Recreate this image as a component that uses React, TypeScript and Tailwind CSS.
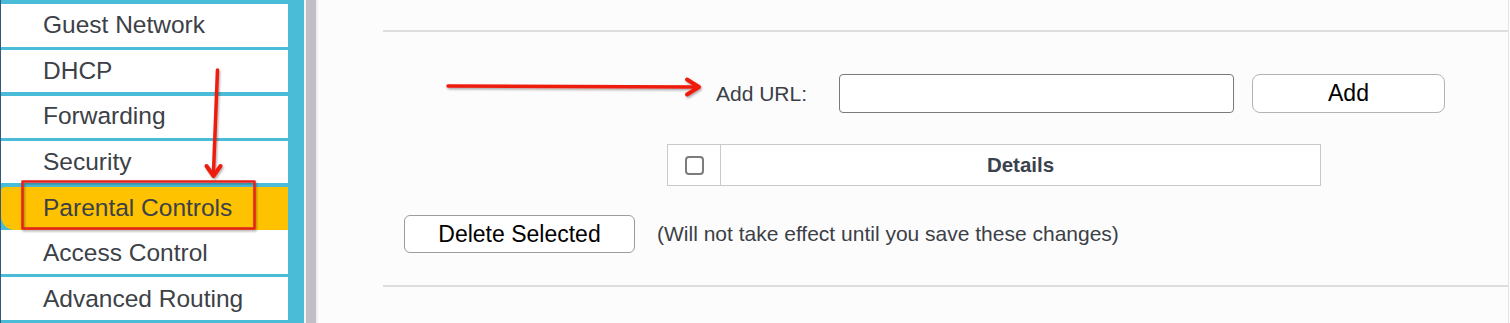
/**
 * Router admin page fragment: side menu with "Parental Controls" selected,
 * and the URL filter form, with red annotation arrows over it.
 */

const menu = [
  { label: 'Guest Network', cls: 'mt-[4px] h-[42.5px] bg-white' },
  { label: 'DHCP', cls: 'mt-[3.5px] h-[42px] bg-white' },
  { label: 'Forwarding', cls: 'mt-[3.5px] h-[42px] bg-white' },
  { label: 'Security', cls: 'mt-[3.5px] h-[42px] bg-white' },
  { label: 'Parental Controls', cls: 'mt-[3.5px] h-[43px] bg-[#fec200] rounded-bl-[14px] rounded-tl-[4px]' },
  { label: 'Access Control', cls: 'h-[44px] pt-[3px] bg-white' },
  { label: 'Advanced Routing', cls: 'mt-[3.5px] h-[43px] pt-[1px] bg-white' },
]

function Annotations() {
  return (
    <svg className="absolute inset-0 pointer-events-none" width="1510" height="323" viewBox="0 0 1510 323" aria-hidden="true">
      <defs>
        <filter id="shadow" x="-10%" y="-10%" width="120%" height="120%">
          <feDropShadow dx="1" dy="1.5" stdDeviation="1" floodColor="#000" floodOpacity="0.35" />
        </filter>
      </defs>
      <g filter="url(#shadow)" stroke="#ee1d10" fill="none" strokeLinecap="round" strokeLinejoin="round">
        {/* highlight box */}
        <rect x="22.5" y="181.5" width="232" height="47" strokeWidth="2.5" stroke="#e3221c" />
        {/* vertical arrow */}
        <path d="M217.5 70 L213.5 172" strokeWidth="3.5" />
        <path d="M206.5 166 L213.5 176 L220.5 166" strokeWidth="4" />
        {/* horizontal arrow */}
        <path d="M448 86 L694 87" strokeWidth="3.5" />
        <path d="M687 79.5 L699 87 L687 94.5" strokeWidth="4" />
      </g>
    </svg>
  )
}

export default function App() {
  return (
    <div className="relative w-[1510px] h-[323px] overflow-hidden flex bg-[#fcfcfd] font-['Liberation_Sans',Arial,sans-serif]">
      {/* side menu */}
      <nav className="w-[288px] h-full flex flex-col bg-[#4abcd7] border-l-[1.5px] border-[#34597a]">
        {menu.map((m) => (
          <div key={m.label} className={`${m.cls} shrink-0 flex items-center pl-[42px] text-[24.5px] text-[#3c4147]`}>
            {m.label}
          </div>
        ))}
      </nav>
      <div className="w-[16px] h-full bg-[#4abcd7]" />
      <div className="w-[2px] h-full bg-[#f4f4f6]" />
      <div className="w-[10px] h-full bg-[#c1bfc5]" />
      <div className="w-[2px] h-full bg-[#efeff1]" />

      {/* content */}
      <main className="w-[1191px] h-full border-r border-[#e4e4e6] pl-[65px]">
        <div className="mt-[30px] border-t-2 border-[#dedee0]" />

        <div className="mt-[42px] flex items-center">
          <span className="ml-[333px] w-[123px] text-[21px] text-[#3b4046]">Add URL:</span>
          <div className="w-[395px] h-[39px] rounded-[4px] border border-[#7a7a7a] bg-white" />
          <button className="ml-[18px] w-[193px] h-[39px] rounded-[8px] border border-[#b3b3b5] bg-white text-[23px] text-black">
            Add
          </button>
        </div>

        <div className="mt-[31px] ml-[284px] w-[654px] h-[42px] flex border border-[#c9c9cb] bg-white">
          <div className="w-[53px] flex items-center justify-center border-r border-[#c9c9cb]">
            <span className="w-[19px] h-[19px] rounded-[4px] border-2 border-[#7c7c7e] bg-white" />
          </div>
          <div className="flex-1 flex items-center justify-center text-[20.5px] font-bold text-[#3a424d]">Details</div>
        </div>

        <div className="mt-[29px] flex items-center">
          <button className="ml-[21px] w-[231px] h-[38px] rounded-[6px] border border-[#9c9c9e] bg-white text-[23px] text-black">
            Delete Selected
          </button>
          <span className="ml-[22px] text-[21px] text-[#3b4046]">(Will not take effect until you save these changes)</span>
        </div>

        <div className="mt-[32px] border-t-2 border-[#dedee0]" />
      </main>

      <Annotations />
    </div>
  )
}
